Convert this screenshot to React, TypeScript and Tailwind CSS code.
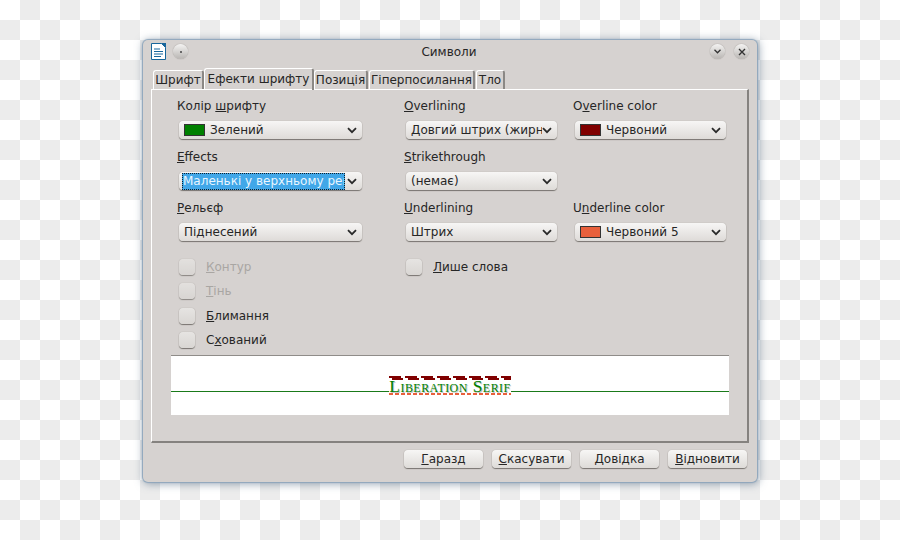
import type { ReactNode } from "react";

const Chevron = () => (
  <svg width="10" height="7" viewBox="0 0 10 7" className="shrink-0">
    <path d="M1 1.2 L5 5.2 L9 1.2" fill="none" stroke="#2a2a2a" strokeWidth="1.8" />
  </svg>
);

function Combo({
  w,
  swatch,
  children,
}: {
  w: string;
  swatch?: string;
  children: ReactNode;
}) {
  return (
    <div
      className={`ml-[2px] flex h-[18px] items-center rounded-[4px] bg-gradient-to-b from-[#f7f6f5] to-[#dedbd8] pl-[5px] pr-[5px] shadow-[0_1px_1px_#77736f,0_0_1px_#9a9692] ${w}`}
    >
      {swatch && (
        <span
          className="mr-[5px] h-[12px] w-[21px] shrink-0 border border-[#333]"
          style={{ backgroundColor: swatch }}
        />
      )}
      <span className="min-w-0 flex-1 overflow-hidden whitespace-nowrap">{children}</span>
      <Chevron />
    </div>
  );
}

function Field({ label, children }: { label: ReactNode; children?: ReactNode }) {
  return (
    <div>
      <div className="mb-[7px] h-[16px] leading-[16px]">{label}</div>
      {children}
    </div>
  );
}

function Check({ children, off }: { children: ReactNode; off?: boolean }) {
  return (
    <div className={`flex h-[24px] items-center ${off ? "text-[#a9a6a3]" : ""}`}>
      <span
        className={`ml-[2px] h-[16px] w-[16px] rounded-[4px] bg-gradient-to-b from-[#e6e4e2] to-[#d9d6d3] shadow-[0_1px_1px_#77736f,0_0_1px_#9a9692] ${
          off ? "opacity-80" : ""
        }`}
      />
      <span className="ml-[11px]">{children}</span>
    </div>
  );
}

function Btn({ w, children }: { w: string; children: ReactNode }) {
  return (
    <div
      className={`flex h-[18px] items-center justify-center rounded-[4px] bg-gradient-to-b from-[#f7f6f5] to-[#dedbd8] shadow-[0_1px_1px_#77736f,0_0_1px_#9a9692] ${w}`}
    >
      {children}
    </div>
  );
}

function Tab({ active, w, children }: { active?: boolean; w: string; children: ReactNode }) {
  return (
    <div
      className={`flex items-center justify-center whitespace-nowrap rounded-t-[3px] border-l border-t border-r-2 border-l-white border-t-white border-r-[#8b8885] ${w} ${
        active ? "relative z-10 -mb-px h-[22px] pb-[1px]" : "h-[19px]"
      }`}
    >
      {children}
    </div>
  );
}

function RoundBtn({ children }: { children?: ReactNode }) {
  return (
    <div className="flex h-[15px] w-[15px] items-center justify-center rounded-full bg-gradient-to-b from-[#f4f3f2] to-[#b9b6b3] shadow-[0_0_1px_#77736f]">
      {children}
    </div>
  );
}

export default function App() {
  return (
    <div className="h-[540px] w-[900px] overflow-hidden bg-[conic-gradient(#ececec_25%,#fff_0_50%,#ececec_0_75%,#fff_0)] bg-[length:40px_40px] pl-[143px] pt-[40px] font-['DejaVu_Sans',sans-serif] text-[12px] text-[#262626]">
      <div className="flex h-[442px] w-[614px] flex-col rounded-[5px] bg-[#d6d2d0] px-[8px] shadow-[0_0_1px_1px_#8ea6bc,1px_1px_8px_1px_rgba(70,95,120,0.55)]">
        {/* title bar */}
        <div className="relative flex h-[23px] shrink-0 items-center">
          <svg width="15" height="17" viewBox="0 0 15 17" className="shrink-0">
            <path d="M.5.5h10l4 4v12H.5z" fill="#fff" stroke="#18669b" />
            <path d="M10 0h5v5z" fill="#18669b" />
            <path d="M3 6h6M3 8.5h9M3 11h9M3 13.5h7" stroke="#18669b" strokeWidth="1.2" />
          </svg>
          <div className="ml-[7px]">
            <RoundBtn>
              <span className="h-[2px] w-[2px] rounded-full bg-[#444]" />
            </RoundBtn>
          </div>
          <div className="flex-1 text-center">Символи</div>
          <div className="flex items-center gap-[9px]">
            <RoundBtn>
              <svg width="7" height="5" viewBox="0 0 7 5">
                <path d="M.5 .8 L3.5 3.8 L6.5 .8" fill="none" stroke="#333" strokeWidth="1.3" />
              </svg>
            </RoundBtn>
            <RoundBtn>
              <svg width="8" height="8" viewBox="0 0 8 8">
                <path d="M1 1 L7 7 M7 1 L1 7" fill="none" stroke="#333" strokeWidth="1.4" />
              </svg>
            </RoundBtn>
          </div>
        </div>

        {/* tabs */}
        <div className="mt-[4px] flex h-[22px] shrink-0 items-end pl-[2px]">
          <Tab w="w-[51px]">Шрифт</Tab>
          <Tab active w="w-[110px]">
            Ефекти шрифту
          </Tab>
          <Tab w="w-[54px]">Позиція</Tab>
          <Tab w="w-[106px] ml-[1px]">Гіперпосилання</Tab>
          <Tab w="w-[29px] ml-[1px]">Тло</Tab>
        </div>

        {/* panel */}
        <div className="h-[354px] shrink-0 border border-b-2 border-r-2 border-l-white border-t-white border-b-[#85827f] border-r-[#85827f] pl-[25px] pt-[8px]">
          <div className="grid grid-cols-[227px_169px_1fr] gap-y-[10px]">
            <Field
              label={
                <>
                  Колір <u>ш</u>рифту
                </>
              }
            >
              <Combo w="w-[183px]" swatch="#008000">
                Зелений
              </Combo>
            </Field>
            <Field
              label={
                <>
                  <u>O</u>verlining
                </>
              }
            >
              <Combo w="w-[151px]">Довгий штрих (жирний)</Combo>
            </Field>
            <Field
              label={
                <>
                  O<u>v</u>erline color
                </>
              }
            >
              <Combo w="w-[151px]" swatch="#800000">
                Червоний
              </Combo>
            </Field>

            <Field
              label={
                <>
                  <u>E</u>ffects
                </>
              }
            >
              <div className="ml-[2px] flex h-[18px] w-[183px] items-center rounded-[4px] bg-gradient-to-b from-[#f7f6f5] to-[#dedbd8] pl-[3px] pr-[5px] shadow-[0_1px_1px_#77736f,0_0_1px_#9a9692]">
                <span className="mr-[2px] h-[17px] min-w-0 flex-1 overflow-hidden whitespace-nowrap border border-dotted border-[#10202c] bg-[#41a7e8] leading-[15px] text-[#e8f6ff]">
                  Маленькі у верхньому регістрі
                </span>
                <Chevron />
              </div>
            </Field>
            <Field
              label={
                <>
                  <u>S</u>trikethrough
                </>
              }
            >
              <Combo w="w-[151px]">(немає)</Combo>
            </Field>
            <div />

            <Field
              label={
                <>
                  <u>Р</u>ельєф
                </>
              }
            >
              <Combo w="w-[183px]">Піднесений</Combo>
            </Field>
            <Field
              label={
                <>
                  <u>U</u>nderlining
                </>
              }
            >
              <Combo w="w-[151px]">Штрих</Combo>
            </Field>
            <Field
              label={
                <>
                  U<u>n</u>derline color
                </>
              }
            >
              <Combo w="w-[151px]" swatch="#e8603c">
                Червоний 5
              </Combo>
            </Field>
          </div>

          <div className="mt-[14px] grid grid-cols-[227px_1fr]">
            <div>
              <Check off>
                <u>К</u>онтур
              </Check>
              <div className="mb-[1px]">
                <Check off>
                  <u>Т</u>інь
                </Check>
              </div>
              <Check>
                <u>Б</u>лимання
              </Check>
              <Check>
                С<u>х</u>ований
              </Check>
            </div>
            <div>
              <Check>
                <u>Л</u>ише слова
              </Check>
            </div>
          </div>

          {/* preview */}
          <div className="relative -ml-[6px] mt-[3px] flex h-[60px] w-[558px] items-center justify-center border-t border-[#8f8c89] bg-white pb-[1px]">
            <div className="absolute left-0 right-0 top-[35px] h-px bg-[#1a7a1a]" />
            <div className="relative z-10 bg-white pt-[1px] font-['Liberation_Serif',serif] text-[17.5px] leading-[16px] tracking-[0.45px] text-[#008000] [font-variant:small-caps] [text-shadow:1px_1px_0_#c4c4c4]">
              Liberation Serif
              <span className="absolute -top-[1px] left-0 right-0 h-[2px] bg-[repeating-linear-gradient(90deg,#800000_0_12px,transparent_12px_16px)]" />
              <span className="absolute left-0 right-0 top-[1px] h-[2px] bg-[repeating-linear-gradient(90deg,transparent_0_3px,#800000_3px_14px,transparent_14px_16px)]" />
              <span className="absolute -bottom-[1px] left-0 right-0 h-[2px] bg-[repeating-linear-gradient(90deg,#e8603c_0_4px,transparent_4px_6px)]" />
            </div>
          </div>
        </div>

        {/* buttons */}
        <div className="mt-[7px] flex justify-end gap-[9px] pr-[2px]">
          <Btn w="w-[79px]">
            <span>
              <u>Г</u>аразд
            </span>
          </Btn>
          <Btn w="w-[79px]">
            <span>
              <u>С</u>касувати
            </span>
          </Btn>
          <Btn w="w-[79px]">
            <span>
              <u>Д</u>овідка
            </span>
          </Btn>
          <Btn w="w-[79px]">
            <span>
              <u>В</u>ідновити
            </span>
          </Btn>
        </div>
      </div>
    </div>
  );
}
